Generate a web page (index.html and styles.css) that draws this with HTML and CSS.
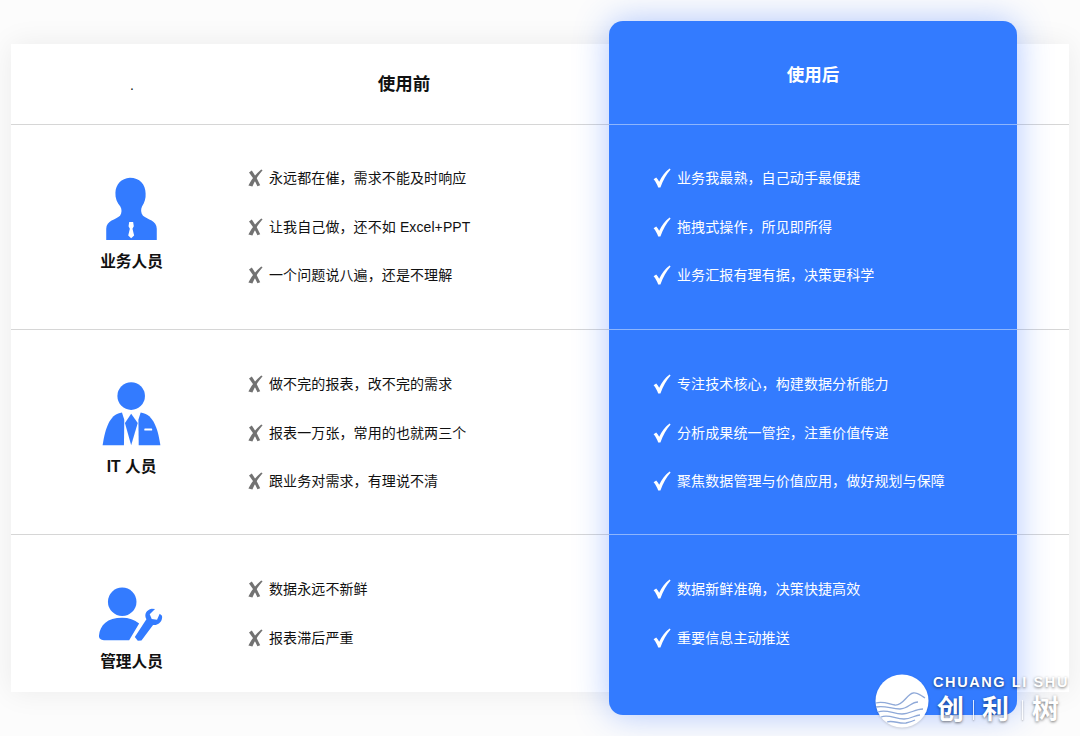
FILE: index.html
```html
<!DOCTYPE html>
<html lang="zh-CN">
<head>
<meta charset="utf-8">
<title>使用前后对比</title>
<link rel="stylesheet" href="styles.css">
</head>
<body>
<svg class="defs" width="0" height="0" aria-hidden="true">
  <symbol id="cross" viewBox="0 0 16 18"><path d="M14.2.5 15.6 1.2C11.4 6 8 11 5.4 17.4L1.4 16.6C4.2 10.5 8.8 5 14.2.5Z"/><path d="M2 3.4 4.8 1.4C7.8 6 10.8 11 13.2 16.2L10.4 17.2C8 11.5 5 7.2 2 3.4Z"/></symbol>
  <symbol id="check" viewBox="0 0 18 20"><path d="M.6 11.2 3.2 9.4C4.4 10.6 5.4 12.2 6.2 13.8 8.6 8.8 12 4 16.6.6L17.6 1.6C13.4 6.2 10 12.4 7.4 19.6H5.2C4.2 16.4 2.6 13.6.6 11.2Z"/></symbol>
</svg>

<main class="sheet">
  <div class="rule r1"></div>
  <div class="rule r2"></div>
  <div class="rule r3"></div>
  <div class="card"></div>
  <div class="card-rule r1"></div>
  <div class="card-rule r2"></div>
  <div class="card-rule r3"></div>

  <div class="head c1 r1"><span class="dot">.</span></div>
  <div class="head c2 r1">使用前</div>
  <div class="head c3 r1 light">使用后</div>

  <div class="who c1 r2">
    <svg class="ico ico-a" viewBox="75 48 160 195"><path fill="#337bff" d="M150 50C180 50 198 70 198 98 199 112 195 126 187 138 183 146 183 158 190 166 204 178 232 180 232 206V240H78V206C78 180 108 178 120 166 126 158 126 146 121 138 111 126 105 112 106 96 107 70 124 52 150 50Z"/><path fill="#fff" d="M148 185H160L162 198 158 206 163 226 154 235 145 226 150 206 146 198Z"/></svg>
    <div class="who-name">业务人员</div>
  </div>
  <ul class="list c2 r2">
    <li><svg class="mark-x"><use href="#cross"/></svg>永远都在催，需求不能及时响应</li>
    <li><svg class="mark-x"><use href="#cross"/></svg>让我自己做，还不如 Excel+PPT</li>
    <li><svg class="mark-x"><use href="#cross"/></svg>一个问题说八遍，还是不理解</li>
  </ul>
  <ul class="list c3 r2 light">
    <li><svg class="mark-v"><use href="#check"/></svg>业务我最熟，自己动手最便捷</li>
    <li><svg class="mark-v"><use href="#check"/></svg>拖拽式操作，所见即所得</li>
    <li><svg class="mark-v"><use href="#check"/></svg>业务汇报有理有据，决策更科学</li>
  </ul>

  <div class="who c1 r3">
    <svg class="ico ico-b" viewBox="68 35 176 195"><g fill="#337bff"><circle cx="155" cy="78" r="42"/><path d="M118 130 127 128 134 150 133 228H68C74 190 84 140 118 130Z"/><path d="M193 130 184 128 177 150 178 228H244C238 190 228 140 193 130Z"/><path d="M155 132 175 160 155 228 136 160Z"/></g><rect x="195" y="177" width="24" height="6" rx="2" fill="#fff"/></svg>
    <div class="who-name">IT 人员</div>
  </div>
  <ul class="list c2 r3">
    <li><svg class="mark-x"><use href="#cross"/></svg>做不完的报表，改不完的需求</li>
    <li><svg class="mark-x"><use href="#cross"/></svg>报表一万张，常用的也就两三个</li>
    <li><svg class="mark-x"><use href="#cross"/></svg>跟业务对需求，有理说不清</li>
  </ul>
  <ul class="list c3 r3 light">
    <li><svg class="mark-v"><use href="#check"/></svg>专注技术核心，构建数据分析能力</li>
    <li><svg class="mark-v"><use href="#check"/></svg>分析成果统一管控，注重价值传递</li>
    <li><svg class="mark-v"><use href="#check"/></svg>聚焦数据管理与价值应用，做好规划与保障</li>
  </ul>

  <div class="who c1 r4">
    <svg class="ico ico-c" viewBox="52 36 196 165"><g fill="#337bff"><circle cx="125" cy="80" r="43"/><path d="M55 182C58 150 80 128 125 128 145 128 162 134 176 146L146 196H70C60 196 54 190 55 182Z"/><path d="M163 186 198 133C190 118 198 104 214 101L224 102 208 118 214 132 230 134 238 116 245 122C248 138 234 152 218 150L183 197 172 198Z"/></g></svg>
    <div class="who-name">管理人员</div>
  </div>
  <ul class="list c2 r4">
    <li><svg class="mark-x"><use href="#cross"/></svg>数据永远不新鲜</li>
    <li><svg class="mark-x"><use href="#cross"/></svg>报表滞后严重</li>
  </ul>
  <ul class="list c3 r4 light">
    <li><svg class="mark-v"><use href="#check"/></svg>数据新鲜准确，决策快捷高效</li>
    <li><svg class="mark-v"><use href="#check"/></svg>重要信息主动推送</li>
  </ul>
</main>

<aside class="brand">
  <svg class="brand-logo" viewBox="0 0 54 54"><circle cx="27" cy="27" r="26.5" fill="#fff"/><g fill="none" stroke="#8fa9d8" stroke-width="1.3"><path d="M1 29C8 27 14 30 20 31 28 32 32 20 38 19 42 18 45 21 50 24"/><path d="M1 33C10 31 16 35 25 35 33 35 36 28 43 28"/><path d="M3 38C12 35 18 40 27 40 35 40 40 35 48 35"/><path d="M6 43C14 40 20 45 29 45 36 45 40 41 45 41"/><path d="M12 48C18 46 24 50 31 49 35 48 38 47 40 46"/></g></svg>
  <div class="brand-text">
    <div class="brand-en">CHUANG LI SHU</div>
    <div class="brand-zh"><span>创</span><i></i><span>利</span><i class="wide"></i><span>树</span></div>
  </div>
</aside>
</body>
</html>
```

FILE: styles.css
```css
* { box-sizing: border-box; }

html, body { margin: 0; padding: 0; }

body {
  width: 1080px;
  height: 736px;
  overflow: hidden;
  position: relative;
  padding: 44px 11px 0;
  background: #fcfcfc;
  color: #111;
  font-family: "Liberation Sans", "Noto Sans CJK SC", sans-serif;
}

.defs { position: absolute; }

.sheet {
  display: grid;
  grid-template-columns: 230px 368px 408px 52px;
  grid-template-rows: 81px 205px 205px 157px;
  background: #fff;
  box-shadow: 0 0 28px rgba(0, 0, 0, 0.07);
}

.r1 { grid-row: 1; }
.r2 { grid-row: 2; }
.r3 { grid-row: 3; }
.r4 { grid-row: 4; }
.c1 { grid-column: 1; }
.c2 { grid-column: 2; }
.c3 { grid-column: 3; }

.rule {
  grid-column: 1 / -1;
  align-self: end;
  height: 1px;
  background: #d6d6d6;
}

.card {
  grid-column: 3;
  grid-row: 1 / -1;
  margin: -23px 0;
  background: #337bff;
  border-radius: 14px;
  box-shadow: 0 0 34px rgba(51, 110, 255, 0.38);
  position: relative;
}

.card-rule {
  grid-column: 3;
  align-self: end;
  height: 1px;
  background: #8db5fd;
  position: relative;
}

.head {
  position: relative;
  display: flex;
  align-items: center;
  justify-content: center;
  font-size: 17.5px;
  font-weight: 700;
  padding-bottom: 5px;
}

.head.c1 { padding: 0 0 0 12px; }
.head.c2 { padding-right: 42px; }
.head.c3 { margin-top: -23px; height: 104px; padding: 40px 0 0; align-items: flex-start; }

.light { color: #fff; }

.dot {
  font-size: 14px;
  font-weight: 400;
  line-height: 1;
}

.who {
  position: relative;
  padding: 52px 0 0 11px;
  display: flex;
  flex-direction: column;
  align-items: center;
  gap: 11px;
}

.ico { display: block; }
.ico-a { width: 53px; height: 64px; }
.ico-b { width: 59px; height: 64px; }
.ico-c { width: 65px; height: 55px; margin: 0 3px 0 0; }
.r4 .who-name { margin-top: -1px; }

.who-name {
  font-size: 15.7px;
  font-weight: 700;
  line-height: 20px;
}

.list {
  position: relative;
  list-style: none;
  margin: 0;
  padding: 43.4px 0 0 6px;
  display: flex;
  flex-direction: column;
  gap: 28.5px;
  font-size: 14px;
  line-height: 20px;
  letter-spacing: 0.1px;
}

.list.r3,
.list.r4 { padding-top: 44px; }

.list li {
  display: flex;
  align-items: center;
  white-space: pre;
}

.list.c3 { padding-left: 44px; }

.mark-x {
  width: 16px;
  height: 18px;
  margin-right: 6px;
  fill: #727272;
  flex: none;
}

.mark-v {
  width: 18px;
  height: 20px;
  margin-right: 6px;
  fill: #fff;
  flex: none;
}

.brand {
  position: absolute;
  left: 875px;
  top: 674px;
  display: flex;
  gap: 4px;
}

.brand-logo {
  width: 54px;
  height: 54px;
  display: block;
  filter: drop-shadow(0 1px 1px rgba(0, 0, 0, 0.15));
}

.brand-text {
  color: #fff;
  text-shadow: 0 1px 3px rgba(0, 0, 0, 0.55);
  white-space: nowrap;
}

.brand-en {
  font-size: 14.5px;
  font-weight: 700;
  letter-spacing: 1.6px;
  line-height: 16px;
}

.brand-zh {
  display: flex;
  align-items: center;
  margin: 5px 0 0 4px;
  font-size: 27px;
  font-weight: 700;
  line-height: 30px;
}

.brand-zh i {
  width: 1px;
  height: 20px;
  margin: 0 8px 0 9px;
  background: rgba(255, 255, 255, 0.85);
  box-shadow: 0 1px 2px rgba(0, 0, 0, 0.4);
}

.brand-zh i.wide { margin: 0 9px 0 13px; }
```
